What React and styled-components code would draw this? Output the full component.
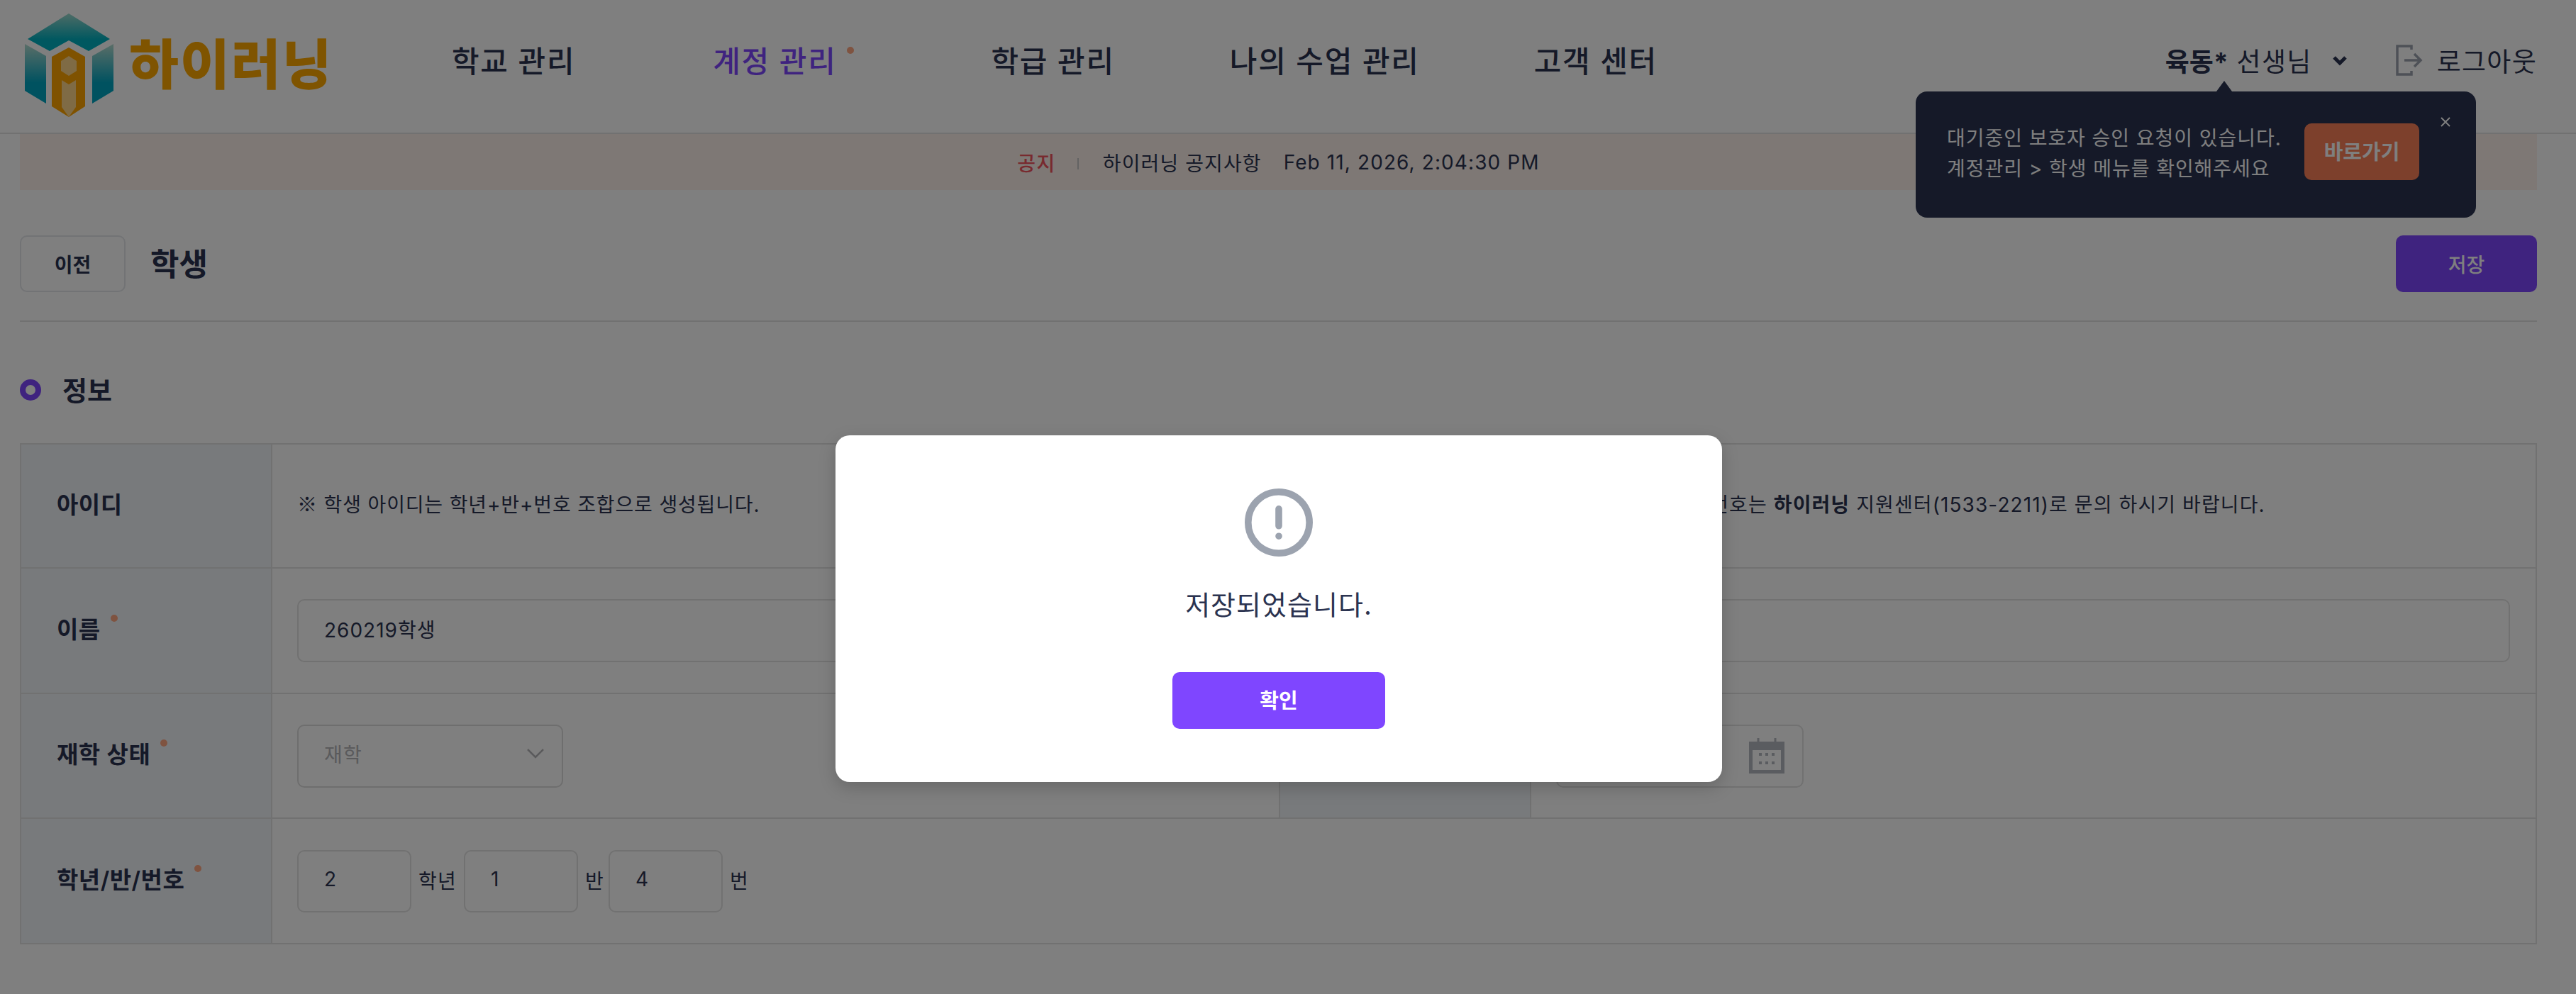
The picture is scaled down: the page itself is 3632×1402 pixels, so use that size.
import styled, { createGlobalStyle } from "styled-components";

const FONT = `Inter, "Noto Sans CJK KR", "Noto Sans", sans-serif`;
const TEXT = "#2b3350";
const PURPLE = "#7f46ff";
const LINE = "#e2e2e2";
const DOT = "#ffa680";

const Global = createGlobalStyle`
  html, body {
    margin: 0;
    padding: 0;
    background: #fff;
    overflow: hidden;
  }
  body {
    font-family: ${FONT};
    color: ${TEXT};
  }
  * {
    box-sizing: border-box;
  }
`;

const Page = styled.div`
  position: relative;
  width: 3632px;
  height: 1402px;
  overflow: hidden;
`;

const Header = styled.header`
  display: flex;
  align-items: center;
  height: 189px;
  padding: 0 55px 2px 33px;
  border-bottom: 2px solid ${LINE};
`;

const Logo = styled.div`
  display: flex;
  align-items: center;
  width: 604px;
  flex: none;
`;

const LogoWord = styled.span`
  margin: 0 0 4px 17px;
  white-space: nowrap;
  color: #ffa800;
  font-size: 76px;
  font-weight: 900;
  letter-spacing: 2px;
  line-height: 1;
`;

const Nav = styled.nav`
  display: flex;
  align-items: center;
  flex: 1;
  padding-bottom: 18px;
`;

const NavItem = styled.a`
  margin-right: ${(p) => p.$gap}px;
  font-size: 42px;
  font-weight: 500;
  letter-spacing: 1.7px;
  white-space: nowrap;
  color: ${(p) => (p.$active ? PURPLE : TEXT)};
`;

const NavDot = styled.i`
  display: inline-block;
  width: 10px;
  height: 10px;
  margin-left: 14px;
  border-radius: 50%;
  background: ${DOT};
  vertical-align: 26px;
`;

const UserBox = styled.div`
  display: flex;
  align-items: center;
  padding-bottom: 16px;
  font-size: 37px;
  letter-spacing: 1.3px;
  white-space: nowrap;

  b {
    font-weight: 700;
    letter-spacing: 0;
    margin-right: 12px;
  }
`;

const Caret = styled.svg`
  width: 22px;
  height: 16px;
  margin: 0 68px 0 28px;
`;

const LogoutIcon = styled.svg`
  width: 38px;
  height: 44px;
  margin-right: 20px;
`;

const Main = styled.main`
  padding: 0 55px 0 28px;
`;

const Notice = styled.div`
  display: flex;
  align-items: center;
  justify-content: center;
  height: 79px;
  background: #fcf1ea;
  font-size: 28px;
`;

const NoticeTag = styled.span`
  color: #f0545f;
  font-weight: 500;
  letter-spacing: 1.5px;
`;

const NoticeBar = styled.i`
  width: 2px;
  height: 16px;
  margin: 4px 34px 0 30px;
  background: #c6c6c6;
`;

const NoticeTitle = styled.span`
  margin-right: 31px;
  letter-spacing: 1.1px;
`;

const NoticeDate = styled.span`
  letter-spacing: 1.1px;
`;

const PageHead = styled.div`
  display: flex;
  align-items: center;
  justify-content: space-between;
  margin-top: 64px;
  padding-bottom: 40px;
  border-bottom: 2px solid ${LINE};
`;

const HeadLeft = styled.div`
  display: flex;
  align-items: center;
  gap: 35px;
`;

const PrevButton = styled.button`
  width: 149px;
  height: 80px;
  padding: 0;
  border: 2px solid #e4e6ea;
  border-radius: 10px;
  background: #fff;
  color: ${TEXT};
  font-family: ${FONT};
  font-size: 28px;
  font-weight: 600;
`;

const PageTitle = styled.h1`
  margin: 0 0 4px;
  font-size: 44px;
  font-weight: 600;
`;

const SaveButton = styled.button`
  width: 199px;
  height: 80px;
  padding: 0;
  border: 0;
  border-radius: 10px;
  background: ${PURPLE};
  color: #fff;
  font-family: ${FONT};
  font-size: 28px;
  font-weight: 500;
`;

const SectionHead = styled.div`
  display: flex;
  align-items: center;
  gap: 30px;
  height: 50px;
  margin: 71px 0 50px;
`;

const Ring = styled.i`
  width: 30px;
  height: 30px;
  border: 8px solid ${PURPLE};
  border-radius: 50%;
`;

const SectionTitle = styled.h2`
  margin: 0 0 4px;
  font-size: 38px;
  font-weight: 600;
`;

const Table = styled.div`
  border: 2px solid ${LINE};
  border-bottom: 0;
`;

const Row = styled.div`
  display: grid;
  grid-template-columns: ${(p) => (p.$full ? "354px 1fr" : "354px 1419px 356px 1fr")};
  height: ${(p) => p.$h}px;
  border-bottom: 2px solid ${LINE};
`;

const Label = styled.div`
  display: flex;
  align-items: center;
  padding: 0 0 8px 50px;
  background: #f1f4f8;
  border-right: 2px solid ${LINE};
  border-left: ${(p) => (p.$second ? `2px solid ${LINE}` : "0")};
  font-size: 33px;
  font-weight: 600;
  letter-spacing: 0.5px;
`;

const Req = styled.i`
  width: 10px;
  height: 10px;
  margin: -28px 0 0 14px;
  border-radius: 50%;
  background: ${DOT};
`;

const Cell = styled.div`
  display: flex;
  align-items: center;
  padding: 0 36px 0 35px;
  font-size: 28px;
  letter-spacing: 1.2px;
`;

const Note = styled.span`
  margin-bottom: 8px;
  letter-spacing: ${(p) => (p.$tight ? "0.85px" : "1.1px")};
  white-space: nowrap;

  b {
    font-weight: 700;
  }
`;

const NoteMark = styled.span`
  font-family: "Noto Sans CJK KR", sans-serif;
`;

const Field = styled.input`
  width: 100%;
  height: 89px;
  padding: 0 36px 6px;
  border: 2px solid ${LINE};
  border-radius: 10px;
  background: #fff;
  color: ${TEXT};
  font-family: ${FONT};
  font-size: 28px;
  letter-spacing: 1px;
  outline: none;
`;

const SelectBox = styled.div`
  display: flex;
  align-items: center;
  justify-content: space-between;
  width: 375px;
  height: 89px;
  padding: 0 24px 6px 36px;
  border: 2px solid #dcdcdc;
  border-radius: 10px;
  background: #fff;
  color: #b5b5b8;
  font-size: 28px;
`;

const Chevron = styled.svg`
  width: 26px;
  height: 16px;
`;

const DateBox = styled.div`
  display: flex;
  align-items: center;
  justify-content: flex-end;
  width: 349px;
  height: 89px;
  padding-right: 24px;
  border: 2px solid ${LINE};
  border-radius: 10px;
`;

const CalendarIcon = styled.svg`
  width: 52px;
  height: 52px;
`;

const NumField = styled(Field)`
  width: 161px;
  height: 88px;
`;

const Unit = styled.span`
  margin: 0 ${(p) => p.$right}px 4px 10px;
  white-space: nowrap;
`;

const Tooltip = styled.div`
  position: absolute;
  left: 2701px;
  top: 129px;
  display: flex;
  width: 790px;
  height: 178px;
  padding: 45px 0 0 44px;
  border-radius: 16px;
  background: #2a3350;
  color: #fff;

  &::before {
    content: "";
    position: absolute;
    left: 424px;
    top: -15px;
    border: solid transparent;
    border-width: 0 11px 15px;
    border-bottom-color: #2a3350;
  }
`;

const TipText = styled.p`
  width: 504px;
  margin: 0;
  font-size: 28px;
  line-height: 43px;
  letter-spacing: 0.95px;
  white-space: nowrap;
`;

const TipButton = styled.button`
  width: 162px;
  height: 80px;
  padding: 0 0 4px;
  border: 0;
  border-radius: 10px;
  background: #fa8058;
  color: #fff;
  font-family: ${FONT};
  font-size: 29px;
  font-weight: 600;
`;

const TipClose = styled.svg`
  position: absolute;
  right: 36px;
  top: 36px;
  width: 14px;
  height: 14px;
`;

const Overlay = styled.div`
  position: absolute;
  inset: 0;
  background: rgba(0, 0, 0, 0.5);
`;

const Modal = styled.div`
  position: absolute;
  left: 1178px;
  top: 614px;
  display: flex;
  flex-direction: column;
  align-items: center;
  width: 1250px;
  height: 489px;
  padding-top: 75px;
  border-radius: 20px;
  background: #fff;
  box-shadow: 0 8px 24px rgba(0, 0, 0, 0.18);
`;

const AlertIcon = styled.svg`
  width: 96px;
  height: 96px;
  color: #9ca3af;
`;

const ModalText = styled.p`
  margin: 40px 0 0;
  font-size: 38px;
  line-height: 56px;
  letter-spacing: 1px;
  color: ${TEXT};
`;

const ModalButton = styled.button`
  width: 300px;
  height: 80px;
  margin-top: 67px;
  padding: 0 0 4px;
  border: 0;
  border-radius: 10px;
  background: ${PURPLE};
  color: #fff;
  font-family: ${FONT};
  font-size: 29px;
  font-weight: 600;
`;

const LogoMark = () => (
  <svg width="132" height="148" viewBox="0 0 132 148">
    <defs>
      <linearGradient id="logoTop" x1="0" y1="0" x2="0" y2="1">
        <stop offset="0" stopColor="#9cd8cc" />
        <stop offset="0.7" stopColor="#00b0c0" />
      </linearGradient>
      <linearGradient id="logoSide" x1="0" y1="0" x2="0" y2="1">
        <stop offset="0" stopColor="#b4dcd0" />
        <stop offset="0.65" stopColor="#00a4c0" />
      </linearGradient>
    </defs>
    <path d="M64 0 L122 36 L92 53 L64 38 L37 53 L6 36 Z" fill="url(#logoTop)" />
    <path d="M2 43 L32 60 L32 127 L2 109 Z" fill="url(#logoSide)" />
    <path d="M127 43 L97 60 L97 127 L127 109 Z" fill="url(#logoSide)" />
    <path d="M64 48 L87 61 L87 131 L64 146 L40 131 L40 61 Z" fill="#ffa500" />
    <path d="M64 60 L75 67 L75 81 L64 88 L53 81 L53 67 Z" fill="#ffd68a" />
    <path d="M54 94 L64 100 L74 94 L74 132 L64 146 L54 132 Z" fill="#ffd68a" />
  </svg>
);

const Required = () => <Req />;

export default function App() {
  return (
    <Page>
      <Global />
      <Header>
        <Logo>
          <LogoMark />
          <LogoWord>하이러닝</LogoWord>
        </Logo>
        <Nav>
          <NavItem $gap={194}>학교 관리</NavItem>
          <NavItem $gap={194} $active>
            계정 관리
            <NavDot />
          </NavItem>
          <NavItem $gap={162}>학급 관리</NavItem>
          <NavItem $gap={161}>나의 수업 관리</NavItem>
          <NavItem $gap={0}>고객 센터</NavItem>
        </Nav>
        <UserBox>
          <b>육동*</b>선생님
          <Caret viewBox="0 0 22 16">
            <path d="M3 4 L11 12 L19 4" fill="none" stroke={TEXT} strokeWidth="5" />
          </Caret>
          <LogoutIcon viewBox="0 0 38 44" fill="none" stroke="#9ca3af" strokeWidth="3.5">
            <path d="M22 7 V2 H2 V42 H22 V37" />
            <path d="M12 22 H34 M26 13 L35 22 L26 31" />
          </LogoutIcon>
          로그아웃
        </UserBox>
      </Header>

      <Main>
        <Notice>
          <NoticeTag>공지</NoticeTag>
          <NoticeBar />
          <NoticeTitle>하이러닝 공지사항</NoticeTitle>
          <NoticeDate>Feb 11, 2026, 2:04:30 PM</NoticeDate>
        </Notice>

        <PageHead>
          <HeadLeft>
            <PrevButton>이전</PrevButton>
            <PageTitle>학생</PageTitle>
          </HeadLeft>
          <SaveButton>저장</SaveButton>
        </PageHead>

        <SectionHead>
          <Ring />
          <SectionTitle>정보</SectionTitle>
        </SectionHead>

        <Table>
          <Row $h={175}>
            <Label>아이디</Label>
            <Cell>
              <Note $tight>
                <NoteMark>※</NoteMark> 학생 아이디는 학년+반+번호 조합으로 생성됩니다.
              </Note>
            </Cell>
            <Label $second />
            <Cell>
              <Note>
                <NoteMark>※</NoteMark> 학생 초기 비밀번호는 <b>하이러닝</b> 지원센터(1533-2211)로 문의 하시기 바랍니다.
              </Note>
            </Cell>
          </Row>
          <Row $h={177}>
            <Label>
              이름
              <Required />
            </Label>
            <Cell>
              <Field defaultValue="260219학생" readOnly />
            </Cell>
            <Label $second />
            <Cell>
              <Field readOnly />
            </Cell>
          </Row>
          <Row $h={176}>
            <Label>
              재학 상태
              <Required />
            </Label>
            <Cell>
              <SelectBox>
                재학
                <Chevron viewBox="0 0 26 16">
                  <path d="M2 2 L13 13 L24 2" fill="none" stroke="#b5b5b8" strokeWidth="2.5" />
                </Chevron>
              </SelectBox>
            </Cell>
            <Label $second />
            <Cell>
              <DateBox>
                <CalendarIcon viewBox="0 0 52 52">
                  <path d="M14 1 V8 M38 1 V8" stroke="#b5b8c0" strokeWidth="3" />
                  <path d="M1 6 H51 V51 H1 Z" fill="#b5b8c0" />
                  <rect x="6" y="18" width="40" height="28" fill="#fff" />
                  <path
                    d="M15 24 h4 M24 24 h4 M33 24 h4 M15 36 h4 M24 36 h4 M33 36 h4"
                    stroke="#b5b8c0"
                    strokeWidth="4"
                  />
                </CalendarIcon>
              </DateBox>
            </Cell>
          </Row>
          <Row $h={177} $full>
            <Label>
              학년/반/번호
              <Required />
            </Label>
            <Cell>
              <NumField defaultValue="2" readOnly />
              <Unit $right={10}>학년</Unit>
              <NumField defaultValue="1" readOnly />
              <Unit $right={6}>반</Unit>
              <NumField defaultValue="4" readOnly />
              <Unit $right={0}>번</Unit>
            </Cell>
          </Row>
        </Table>
      </Main>

      <Tooltip>
        <TipText>
          대기중인 보호자 승인 요청이 있습니다.
          <br />
          계정관리 &gt; 학생 메뉴를 확인해주세요
        </TipText>
        <TipButton>바로가기</TipButton>
        <TipClose viewBox="0 0 14 14">
          <path d="M1 1 L13 13 M13 1 L1 13" stroke="#fff" strokeWidth="2" />
        </TipClose>
      </Tooltip>

      <Overlay />

      <Modal>
        <AlertIcon viewBox="0 0 20 20" fill="none">
          <path
            d="M10 11V6m0 8h.01M19 10a9 9 0 1 1-18 0 9 9 0 0 1 18 0Z"
            stroke="currentColor"
            strokeLinecap="round"
            strokeLinejoin="round"
            strokeWidth="2"
          />
        </AlertIcon>
        <ModalText>저장되었습니다.</ModalText>
        <ModalButton>확인</ModalButton>
      </Modal>
    </Page>
  );
}
